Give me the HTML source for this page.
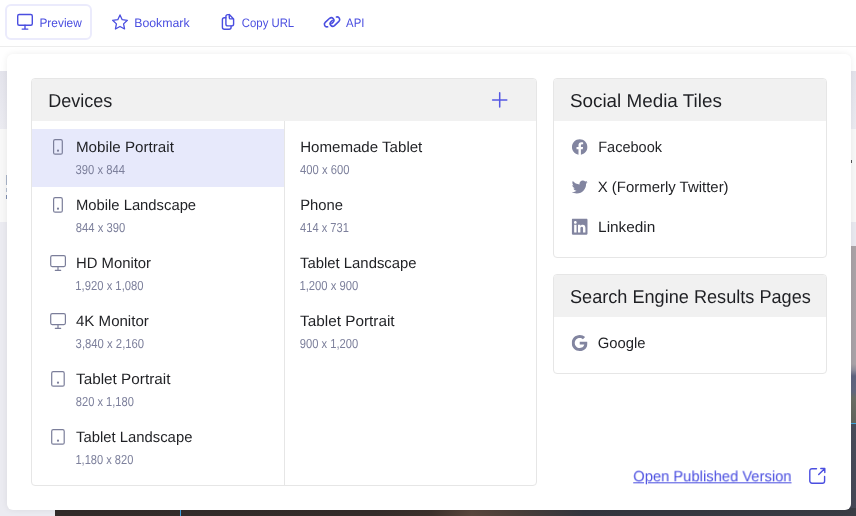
<!DOCTYPE html>
<html><head><meta charset="utf-8"><title>Preview</title>
<style>
*{box-sizing:border-box;margin:0;padding:0}
html,body{width:856px;height:516px;overflow:hidden;background:#fff;font-family:"Liberation Sans",sans-serif;color:#1f2024}
.abs{position:absolute}
#bg{position:absolute;left:0;top:0;width:856px;height:516px;background:#fff;overflow:hidden}
#bg div{position:absolute}
#toolbar{position:absolute;left:0;top:0;width:856px;height:47px;background:#fff;border-bottom:1px solid #ededed;z-index:3}
#pv{position:absolute;left:5px;top:4px;width:87px;height:36px;border:2px solid #ebebfc;border-radius:6px}
#pop{position:absolute;left:7px;top:53.5px;width:844px;height:456.5px;background:#fff;border-radius:6px;box-shadow:0 0 7px rgba(0,0,0,.07);z-index:2}
.card{position:absolute;border:1px solid #e6e6e6;border-radius:4px;background:#fff;overflow:hidden;z-index:3}
.ch{position:absolute;left:0;top:0;right:0;height:42px;background:#f1f1f1}
#ov{position:absolute;left:0;top:0;width:856px;height:516px;z-index:6;overflow:visible}
#ov .p{stroke:#4a4ee0;fill:none;stroke-width:1.4;stroke-linecap:round;stroke-linejoin:round}
#ov .g{stroke:#7b7e9a;fill:none;stroke-width:1.2;stroke-linecap:round;stroke-linejoin:round}
#ov .f{fill:#8285a0;stroke:none}
#txt{position:absolute;left:0;top:0;z-index:7;will-change:transform}
.x{position:absolute;white-space:nowrap;transform-origin:0 50%;text-rendering:geometricPrecision}
.tb{top:14px;font-size:12.3px;line-height:18px;color:#4a4ee0}
.h{top:89px;font-size:18.6px;line-height:24px;color:#1f2024}
.t{top:138px;font-size:15px;line-height:18px;color:#1f2024}
.s{top:163px;font-size:13px;line-height:14px;color:#7d809c}
.lk{top:467px;font-size:15px;line-height:18px;color:#4a4ee0;text-decoration:underline}
</style></head><body>
<div id="bg">
  <div style="left:0;top:71px;width:30px;height:58px;background:linear-gradient(#e4e4ec,#ebebf1)"></div>
  <div style="left:0;top:129px;width:30px;height:93px;background:#f8f8f8"></div>
  <div style="left:0;top:222px;width:60px;height:294px;background:#ebebf1"></div>
  <div style="left:6px;top:175px;width:1px;height:10px;background:#a9b4c8"></div>
  <div style="left:6px;top:188px;width:1px;height:4px;background:#b5bfd0"></div>
  <div style="left:6px;top:195px;width:1px;height:4px;background:#7f8fb0"></div>
  <div style="left:826px;top:71px;width:30px;height:58px;background:linear-gradient(#e4e4ec,#ebebf1)"></div>
  <div style="left:826px;top:129px;width:30px;height:93px;background:#f8f8f8"></div>
  <div style="left:851px;top:160px;width:1px;height:3px;background:#555"></div>
  <div style="left:826px;top:222px;width:30px;height:24px;background:#e9e9f0"></div>
  <div style="left:826px;top:246px;width:30px;height:270px;background:linear-gradient(#aaa3a7 0,#a9a3a8 118px,#8f8e9c 124px,#5f6480 130px,#63687e 146px,#6b6f66 152px,#62655e 177px,#494c5a 178px,#454856 270px)"></div>
  <div style="left:826px;top:423px;width:30px;height:1px;background:#3fa9e0"></div>
  <div style="left:55px;top:508px;width:801px;height:8px;background:linear-gradient(90deg,#332c2a 0,#352d2b 40%,#3d322d 47%,#5a483e 52%,#4a3f3a 58%,#34363e 66%,#3a3d45 100%)"></div>
  <div style="left:180px;top:508px;width:1px;height:8px;background:#3fa0e0"></div>
</div>
<div id="toolbar"><div id="pv"></div></div>
<div id="pop"></div>
<div class="card" style="left:31px;top:78px;width:506px;height:408px">
  <div class="ch"></div>
  <div class="abs" style="left:252px;top:42px;width:1px;height:366px;background:#e6e6e6"></div>
  <div class="abs" style="left:0;top:50px;width:252px;height:58px;background:#e7e9fb"></div>
</div>
<div class="card" style="left:553px;top:78px;width:274px;height:180px"><div class="ch"></div></div>
<div class="card" style="left:553px;top:274px;width:274px;height:100px"><div class="ch"></div></div>
<svg id="ov" viewBox="0 0 856 516">
  <!-- toolbar icons -->
  <g class="p">
    <rect x="17.700" y="14.500" width="14.600" height="10.800" rx="1.500"/><path d="M25 25.300V29.100M22.200 29.100H27.800"/>
    <path d="M120.000 14.960 L122.200 19.670 L127.360 20.310 L123.570 23.860 L124.550 28.960 L120.000 26.450 L115.450 28.960 L116.430 23.860 L112.640 20.310 L117.800 19.670Z" style="stroke-width:1.300"/>
    <path d="M229.3 14.6H227.9a2 2 0 0 0-2 2V23.9a2 2 0 0 0 2 2H231.6a2 2 0 0 0 2-2V18.9L229.3 14.6V17.7a1.2 1.2 0 0 0 1.2 1.2H233.6"/>
    <path d="M225.9 17.8H224.4a2 2 0 0 0-2 2V27.2a2 2 0 0 0 2 2H229.1a2 2 0 0 0 2-2V25.9"/>
    <path d="M327.63 26.83A2.62 2.62 0 0 1 325.21 22.38L329.64 18.26A2.62 2.62 0 0 1 333.2 22.08L331.84 23.35" style="stroke-width:1.6"/>
    <path d="M336.49 16.99A2.62 2.62 0 0 1 338.9 21.44L334.48 25.57A2.62 2.62 0 0 1 330.91 21.74L332.27 20.47" style="stroke-width:1.6"/>
    <path d="M492.600 100H506.800M499.700 92.800V107.100" style="stroke-width:1.500;stroke:#5558e3"/>
    <path d="M816.500 468.700H812a2.200 2.200 0 0 0-2.200 2.200V481a2.200 2.200 0 0 0 2.200 2.200H822.400a2.200 2.200 0 0 0 2.200-2.200V476.500"/>
    <path d="M818.700 474.600L824.600 468.700M820.800 468.500H824.800V472.500"/>
  </g>
  <!-- device icons -->
  <g class="g">
    <rect x="53.600" y="139.700" width="8.700" height="14.500" rx="1.500"/><circle cx="58" cy="150.700" r=".5"/>
    <rect x="53.600" y="197.700" width="8.700" height="14.500" rx="1.500"/><circle cx="58" cy="208.700" r=".5"/>
    <rect x="50.700" y="255.700" width="14.700" height="10.900" rx="1.500"/><path d="M58 266.600V270.300M55.300 270.300H60.700"/>
    <rect x="50.700" y="313.700" width="14.700" height="10.900" rx="1.500"/><path d="M58 324.600V328.300M55.300 328.300H60.700"/>
    <rect x="51.700" y="371.700" width="12.500" height="14.500" rx="1.500"/><circle cx="58" cy="382.700" r=".5"/>
    <rect x="51.700" y="429.700" width="12.500" height="14.500" rx="1.500"/><circle cx="58" cy="440.700" r=".5"/>
  </g>
  <!-- brand icons -->
  <g class="f">
    <svg x="571.700" y="139" width="16" height="16" viewBox="0 0 512 512"><path d="M504 256C504 119 393 8 256 8S8 119 8 256c0 123.780 90.690 226.380 209.250 245V327.690h-63V256h63v-54.640c0-62.150 37-96.480 93.670-96.480 27.140 0 55.520 4.840 55.520 4.840v61h-31.280c-30.800 0-40.410 19.120-40.410 38.730V256h68.780l-11 71.690h-57.780V501C413.310 482.380 504 379.780 504 256z"/></svg>
    <svg x="571.700" y="179" width="16" height="16" viewBox="0 0 512 512"><path d="M459.370 151.716c.325 4.548.325 9.097.325 13.645 0 138.720-105.583 298.558-298.558 298.558-59.452 0-114.680-17.219-161.137-47.106 8.447.974 16.568 1.299 25.340 1.299 49.055 0 94.213-16.568 130.274-44.832-46.132-.975-84.792-31.188-98.112-72.772 6.498.974 12.995 1.624 19.818 1.624 9.421 0 18.843-1.300 27.614-3.573-48.081-9.747-84.143-51.980-84.143-102.985v-1.299c13.969 7.797 30.214 12.670 47.431 13.319-28.264-18.843-46.781-51.005-46.781-87.391 0-19.492 5.197-37.360 14.294-52.954 51.655 63.675 129.300 105.258 216.365 109.807-1.624-7.797-2.599-15.918-2.599-24.040 0-57.828 46.782-104.934 104.934-104.934 30.213 0 57.502 12.670 76.670 33.137 23.715-4.548 46.456-13.320 66.599-25.340-7.798 24.366-24.366 44.833-46.132 57.827 21.117-2.273 41.584-8.122 60.426-16.243-14.292 20.791-32.161 39.308-52.628 54.253z"/></svg>
    <svg x="571.700" y="217.600" width="16" height="18.300" viewBox="0 0 448 512"><path d="M416 32H31.900C14.300 32 0 46.500 0 64.300v383.400C0 465.500 14.300 480 31.900 480H416c17.600 0 32-14.500 32-32.300V64.300c0-17.800-14.400-32.300-32-32.300zM135.400 416H69V202.200h66.500V416zm-33.200-243c-21.300 0-38.500-17.300-38.500-38.500S80.900 96 102.200 96c21.200 0 38.500 17.300 38.500 38.500 0 21.300-17.200 38.500-38.500 38.500zm282.100 243h-66.400V312c0-24.800-.5-56.700-34.500-56.700-34.600 0-39.900 27-39.900 54.900V416h-66.400V202.200h63.700v29.200h.9c8.900-16.800 30.600-34.500 62.900-34.500 67.200 0 79.700 44.300 79.700 101.900V416z"/></svg>
    <svg x="571.700" y="334.700" width="15.800" height="16.600" viewBox="0 0 488 512"><path d="M488 261.800C488 403.300 391.100 504 248 504 110.800 504 0 393.200 0 256S110.800 8 248 8c66.800 0 123 24.500 166.300 64.900l-67.500 64.900C258.500 52.600 94.300 116.600 94.300 256c0 86.500 69.100 156.600 153.700 156.600 98.200 0 135-70.400 140.800-106.900H248v-85.300h236.100c2.300 12.700 3.900 24.900 3.900 41.400z"/></svg>
  </g>
</svg>

<div id="txt">
<div class="x tb" id="x0" style="left:39px;margin-top:0px;transform:translate(0.43px,0px) scaleX(0.9672)">Preview</div>
<div class="x tb" id="x1" style="left:134px;margin-top:0px;transform:translate(0.20px,0px) scaleX(1.0001)">Bookmark</div>
<div class="x tb" id="x2" style="left:241px;margin-top:0px;transform:translate(0.87px,0px) scaleX(0.9219)">Copy URL</div>
<div class="x tb" id="x3" style="left:346px;margin-top:0px;transform:translate(0.06px,0px) scaleX(0.9257)">API</div>
<div class="x h" id="x4" style="left:48px;margin-top:0px;transform:translate(0.16px,0px) scaleX(0.9704)">Devices</div>
<div class="x h" id="x5" style="left:569px;margin-top:0px;transform:translate(0.95px,0px) scaleX(1.0135)">Social Media Tiles</div>
<div class="x h" id="x6" style="left:569px;margin-top:196px;transform:translate(0.99px,0px) scaleX(0.9748)">Search Engine Results Pages</div>
<div class="x t" id="x7" style="left:75px;margin-top:0px;transform:translate(0.95px,0.7px) scaleX(1.0130)">Mobile Portrait</div>
<div class="x s" id="x8" style="left:75px;margin-top:0px;transform:translate(0.61px,-0.3px) scaleX(0.8648)">390 x 844</div>
<div class="x t" id="x9" style="left:75px;margin-top:58px;transform:translate(0.93px,0.7px) scaleX(0.9870)">Mobile Landscape</div>
<div class="x s" id="x10" style="left:75px;margin-top:58px;transform:translate(0.77px,-0.3px) scaleX(0.8657)">844 x 390</div>
<div class="x t" id="x11" style="left:75px;margin-top:116px;transform:translate(0.96px,0.7px) scaleX(0.9902)">HD Monitor</div>
<div class="x s" id="x12" style="left:75px;margin-top:116px;transform:translate(0.35px,-0.3px) scaleX(0.8653)">1,920 x 1,080</div>
<div class="x t" id="x13" style="left:75px;margin-top:174px;transform:translate(0.99px,0.7px) scaleX(1.0036)">4K Monitor</div>
<div class="x s" id="x14" style="left:75px;margin-top:174px;transform:translate(0.60px,-0.3px) scaleX(0.8700)">3,840 x 2,160</div>
<div class="x t" id="x15" style="left:76px;margin-top:232px;transform:translate(0.03px,0.7px) scaleX(1.0195)">Tablet Portrait</div>
<div class="x s" id="x16" style="left:75px;margin-top:232px;transform:translate(0.78px,-0.3px) scaleX(0.8544)">820 x 1,180</div>
<div class="x t" id="x17" style="left:76px;margin-top:290px;transform:translate(0.03px,0.7px) scaleX(0.9895)">Tablet Landscape</div>
<div class="x s" id="x18" style="left:75px;margin-top:290px;transform:translate(0.44px,-0.3px) scaleX(0.8521)">1,180 x 820</div>
<div class="x t" id="x19" style="left:300px;margin-top:0px;transform:translate(0.18px,0.7px) scaleX(1.0055)">Homemade Tablet</div>
<div class="x s" id="x20" style="left:300px;margin-top:0px;transform:translate(0.08px,-0.3px) scaleX(0.8645)">400 x 600</div>
<div class="x t" id="x21" style="left:300px;margin-top:58px;transform:translate(0.19px,0.7px) scaleX(0.9873)">Phone</div>
<div class="x s" id="x22" style="left:300px;margin-top:58px;transform:translate(0.11px,-0.3px) scaleX(0.8525)">414 x 731</div>
<div class="x t" id="x23" style="left:300px;margin-top:116px;transform:translate(0.11px,0.7px) scaleX(0.9898)">Tablet Landscape</div>
<div class="x s" id="x24" style="left:299px;margin-top:116px;transform:translate(0.41px,-0.3px) scaleX(0.8681)">1,200 x 900</div>
<div class="x t" id="x25" style="left:300px;margin-top:174px;transform:translate(0.07px,0.7px) scaleX(1.0215)">Tablet Portrait</div>
<div class="x s" id="x26" style="left:299px;margin-top:174px;transform:translate(0.68px,-0.3px) scaleX(0.8616)">900 x 1,200</div>
<div class="x t" id="x27" style="left:598px;margin-top:0px;transform:translate(0.24px,0.7px) scaleX(0.9680)">Facebook</div>
<div class="x t" id="x28" style="left:597px;margin-top:40px;transform:translate(0.72px,0.7px) scaleX(0.9960)">X (Formerly Twitter)</div>
<div class="x t" id="x29" style="left:598px;margin-top:80px;transform:translate(0.08px,0.7px) scaleX(1.0246)">Linkedin</div>
<div class="x t" id="x30" style="left:597px;margin-top:196px;transform:translate(0.73px,0.7px) scaleX(0.9881)">Google</div>
<div class="x lk" id="x31" style="left:633px;margin-top:0px;transform:translate(0.24px,1.3px) scaleX(0.9833)">Open Published Version</div>
</div>
</body></html>
